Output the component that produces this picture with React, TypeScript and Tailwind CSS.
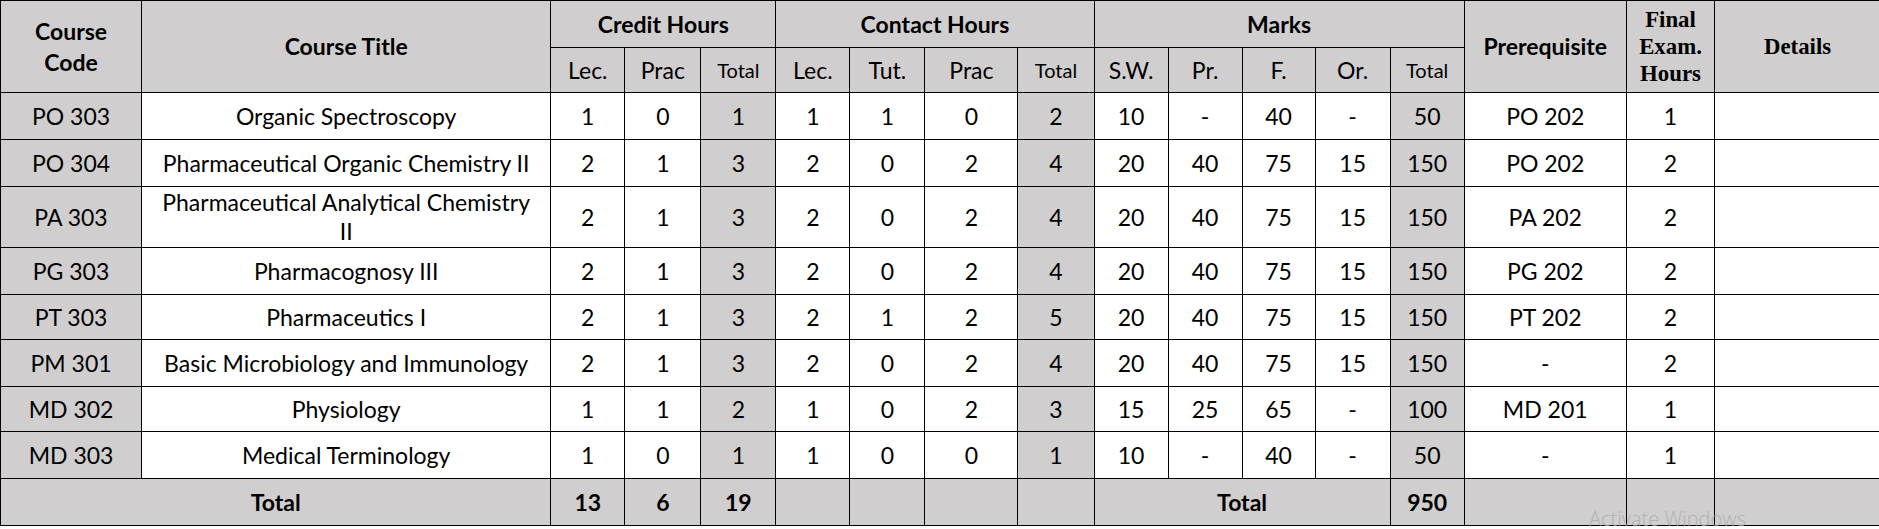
import React from 'react';

type Row = {
  code: string;
  title: string;
  credit: [string, string, string];
  contact: [string, string, string, string];
  marks: [string, string, string, string, string];
  prereq: string;
  exam: string;
  h: string;
};

const rows: Row[] = [
  { code: 'PO 303', title: 'Organic Spectroscopy', credit: ['1', '0', '1'], contact: ['1', '1', '0', '2'], marks: ['10', '-', '40', '-', '50'], prereq: 'PO 202', exam: '1', h: 'h-[47px]' },
  { code: 'PO 304', title: 'Pharmaceutical Organic Chemistry II', credit: ['2', '1', '3'], contact: ['2', '0', '2', '4'], marks: ['20', '40', '75', '15', '150'], prereq: 'PO 202', exam: '2', h: 'h-[47px]' },
  { code: 'PA 303', title: 'Pharmaceutical Analytical Chemistry II', credit: ['2', '1', '3'], contact: ['2', '0', '2', '4'], marks: ['20', '40', '75', '15', '150'], prereq: 'PA 202', exam: '2', h: 'h-[61px]' },
  { code: 'PG 303', title: 'Pharmacognosy III', credit: ['2', '1', '3'], contact: ['2', '0', '2', '4'], marks: ['20', '40', '75', '15', '150'], prereq: 'PG 202', exam: '2', h: 'h-[47px]' },
  { code: 'PT 303', title: 'Pharmaceutics I', credit: ['2', '1', '3'], contact: ['2', '1', '2', '5'], marks: ['20', '40', '75', '15', '150'], prereq: 'PT 202', exam: '2', h: 'h-[45px]' },
  { code: 'PM 301', title: 'Basic Microbiology and Immunology', credit: ['2', '1', '3'], contact: ['2', '0', '2', '4'], marks: ['20', '40', '75', '15', '150'], prereq: '-', exam: '2', h: 'h-[47px]' },
  { code: 'MD 302', title: 'Physiology', credit: ['1', '1', '2'], contact: ['1', '0', '2', '3'], marks: ['15', '25', '65', '-', '100'], prereq: 'MD 201', exam: '1', h: 'h-[45px]' },
  { code: 'MD 303', title: 'Medical Terminology', credit: ['1', '0', '1'], contact: ['1', '0', '0', '1'], marks: ['10', '-', '40', '-', '50'], prereq: '-', exam: '1', h: 'h-[47px]' },
];

const widths = [141, 409, 74, 76, 75, 74, 75, 93, 76, 74, 74, 73, 75, 74, 162, 88, 166];

const cell = 'border border-black text-center align-middle p-0';
const gray = 'bg-[#d0cece]';
const serif = "font-['Liberation_Serif',serif] font-bold text-[24px] leading-[27px] scale-x-[0.95]";

export default function App() {
  return (
    <div className="relative w-[1879px] h-[529px] overflow-hidden bg-white">
      <table className="table-fixed border-collapse w-[1881px] text-black text-[23px] leading-[29px] font-['Lato','Open_Sans',sans-serif]">
        <colgroup>
          {widths.map((w, i) => (
            <col key={i} style={{ width: w }} />
          ))}
        </colgroup>
        <thead>
          <tr className="h-[47px]">
            <th rowSpan={2} className={`${cell} ${gray} font-bold leading-[31px]`}>Course<br />Code</th>
            <th rowSpan={2} className={`${cell} ${gray} font-bold`}>Course Title</th>
            <th colSpan={3} className={`${cell} ${gray} font-bold`}>Credit Hours</th>
            <th colSpan={4} className={`${cell} ${gray} font-bold`}>Contact Hours</th>
            <th colSpan={5} className={`${cell} ${gray} font-bold`}>Marks</th>
            <th rowSpan={2} className={`${cell} ${gray} font-bold`}>Prerequisite</th>
            <th rowSpan={2} className={`${cell} ${gray}`}>
              <div className={serif}>Final<br />Exam.<br />Hours</div>
            </th>
            <th rowSpan={2} className={`${cell} ${gray}`}>
              <div className={serif}>Details</div>
            </th>
          </tr>
          <tr className="h-[45px]">
            <th className={`${cell} ${gray} font-normal`}>Lec.</th>
            <th className={`${cell} ${gray} font-normal`}>Prac</th>
            <th className={`${cell} ${gray} font-normal text-[20px]`}>Total</th>
            <th className={`${cell} ${gray} font-normal`}>Lec.</th>
            <th className={`${cell} ${gray} font-normal`}>Tut.</th>
            <th className={`${cell} ${gray} font-normal`}>Prac</th>
            <th className={`${cell} ${gray} font-normal text-[20px]`}>Total</th>
            <th className={`${cell} ${gray} font-normal`}>S.W.</th>
            <th className={`${cell} ${gray} font-normal`}>Pr.</th>
            <th className={`${cell} ${gray} font-normal`}>F.</th>
            <th className={`${cell} ${gray} font-normal`}>Or.</th>
            <th className={`${cell} ${gray} font-normal text-[20px]`}>Total</th>
          </tr>
        </thead>
        <tbody>
          {rows.map((r) => (
            <tr key={r.code} className={r.h}>
              <td className={`${cell} ${gray}`}>{r.code}</td>
              <td className={`${cell} px-5`}>{r.title}</td>
              <td className={cell}>{r.credit[0]}</td>
              <td className={cell}>{r.credit[1]}</td>
              <td className={`${cell} ${gray}`}>{r.credit[2]}</td>
              <td className={cell}>{r.contact[0]}</td>
              <td className={cell}>{r.contact[1]}</td>
              <td className={cell}>{r.contact[2]}</td>
              <td className={`${cell} ${gray}`}>{r.contact[3]}</td>
              <td className={cell}>{r.marks[0]}</td>
              <td className={cell}>{r.marks[1]}</td>
              <td className={cell}>{r.marks[2]}</td>
              <td className={cell}>{r.marks[3]}</td>
              <td className={`${cell} ${gray}`}>{r.marks[4]}</td>
              <td className={cell}>{r.prereq}</td>
              <td className={cell}>{r.exam}</td>
              <td className={cell}></td>
            </tr>
          ))}
          <tr className="h-[47px] font-bold">
            <td colSpan={2} className={`${cell} ${gray}`}>Total</td>
            <td className={`${cell} ${gray}`}>13</td>
            <td className={`${cell} ${gray}`}>6</td>
            <td className={`${cell} ${gray}`}>19</td>
            <td className={`${cell} ${gray}`}></td>
            <td className={`${cell} ${gray}`}></td>
            <td className={`${cell} ${gray}`}></td>
            <td className={`${cell} ${gray}`}></td>
            <td colSpan={4} className={`${cell} ${gray}`}>Total</td>
            <td className={`${cell} ${gray}`}>950</td>
            <td className={`${cell} ${gray}`}></td>
            <td className={`${cell} ${gray}`}></td>
            <td className={`${cell} ${gray}`}></td>
          </tr>
        </tbody>
      </table>
      <div className="absolute left-[1589px] top-[506px] text-[20px] leading-[26px] text-[#a9a9a9]/80 font-['Open_Sans',sans-serif] font-light">
        Activate Windows
      </div>
    </div>
  );
}
